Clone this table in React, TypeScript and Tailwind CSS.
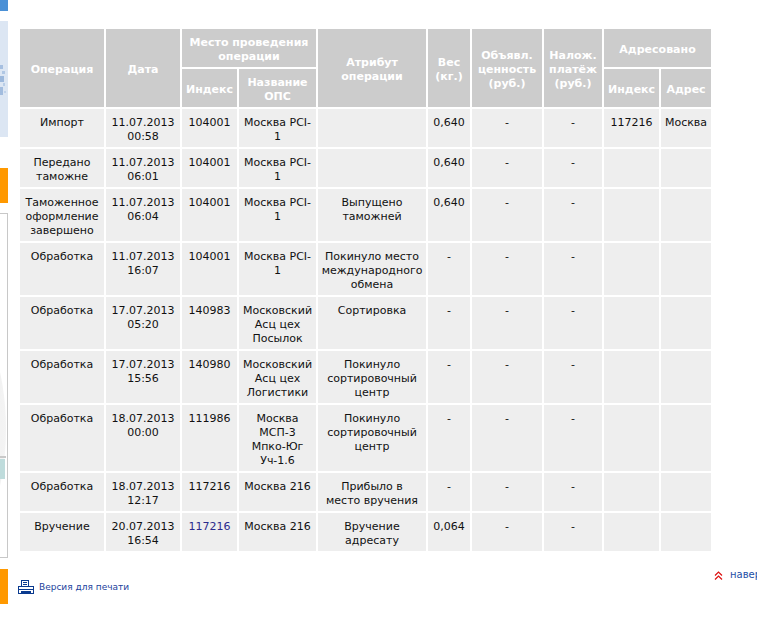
import React from "react";

type Row = {
  op: string[];
  date: string[];
  idx: string;
  idxBlue?: boolean;
  ops: string[];
  attr: string[];
  weight: string;
  val: string;
  cod: string;
  aIdx: string;
  aAddr: string;
};

const rows: Row[] = [
  { op: ["Импорт"], date: ["11.07.2013", "00:58"], idx: "104001", ops: ["Москва PCI-", "1"], attr: [], weight: "0,640", val: "-", cod: "-", aIdx: "117216", aAddr: "Москва" },
  { op: ["Передано", "таможне"], date: ["11.07.2013", "06:01"], idx: "104001", ops: ["Москва PCI-", "1"], attr: [], weight: "0,640", val: "-", cod: "-", aIdx: "", aAddr: "" },
  { op: ["Таможенное", "оформление", "завершено"], date: ["11.07.2013", "06:04"], idx: "104001", ops: ["Москва PCI-", "1"], attr: ["Выпущено", "таможней"], weight: "0,640", val: "-", cod: "-", aIdx: "", aAddr: "" },
  { op: ["Обработка"], date: ["11.07.2013", "16:07"], idx: "104001", ops: ["Москва PCI-", "1"], attr: ["Покинуло место", "международного", "обмена"], weight: "-", val: "-", cod: "-", aIdx: "", aAddr: "" },
  { op: ["Обработка"], date: ["17.07.2013", "05:20"], idx: "140983", ops: ["Московский", "Асц цех", "Посылок"], attr: ["Сортировка"], weight: "-", val: "-", cod: "-", aIdx: "", aAddr: "" },
  { op: ["Обработка"], date: ["17.07.2013", "15:56"], idx: "140980", ops: ["Московский", "Асц цех", "Логистики"], attr: ["Покинуло", "сортировочный", "центр"], weight: "-", val: "-", cod: "-", aIdx: "", aAddr: "" },
  { op: ["Обработка"], date: ["18.07.2013", "00:00"], idx: "111986", ops: ["Москва", "МСП-3", "Мпко-Юг", "Уч-1.6"], attr: ["Покинуло", "сортировочный", "центр"], weight: "-", val: "-", cod: "-", aIdx: "", aAddr: "" },
  { op: ["Обработка"], date: ["18.07.2013", "12:17"], idx: "117216", ops: ["Москва 216"], attr: ["Прибыло в", "место вручения"], weight: "-", val: "-", cod: "-", aIdx: "", aAddr: "" },
  { op: ["Вручение"], date: ["20.07.2013", "16:54"], idx: "117216", idxBlue: true, ops: ["Москва 216"], attr: ["Вручение", "адресату"], weight: "0,064", val: "-", cod: "-", aIdx: "", aAddr: "" },
];

function Lines({ lines }: { lines: string[] }) {
  return (
    <>
      {lines.map((l, i) => (
        <React.Fragment key={i}>
          {i > 0 && <br />}
          {l}
        </React.Fragment>
      ))}
    </>
  );
}

const th = "bg-[#cccccc] text-white font-bold text-center align-middle px-[2px] pt-[7px] pb-[3px] whitespace-nowrap";
const td = "bg-[#eeeeee] text-[#111111] text-center align-top px-[2px] pt-[7px] pb-[3px] whitespace-nowrap";

function Printer() {
  return (
    <svg width="16" height="14" viewBox="0 0 16 14" className="block">
      <rect x="3.5" y="0.5" width="7" height="6" fill="white" stroke="#0a3a8f" />
      <line x1="5" y1="2.5" x2="9" y2="2.5" stroke="#0a3a8f" />
      <line x1="5" y1="4.5" x2="9" y2="4.5" stroke="#0a3a8f" />
      <rect x="0.5" y="6.5" width="15" height="7" fill="white" stroke="#0a3a8f" />
      <line x1="0.5" y1="9.5" x2="15.5" y2="9.5" stroke="#0a3a8f" />
      <rect x="3" y="11" width="10" height="2" fill="#0a3a8f" />
    </svg>
  );
}

function Chevrons() {
  return (
    <svg width="9" height="9" viewBox="0 0 9 9" className="block">
      <polyline points="1,4.5 4.5,1 8,4.5" fill="none" stroke="#dd1111" strokeWidth="1.2" />
      <polyline points="1,8.5 4.5,5 8,8.5" fill="none" stroke="#dd1111" strokeWidth="1.2" />
    </svg>
  );
}

export default function App() {
  return (
    <div className="w-[757px] h-[624px] overflow-hidden bg-white font-['DejaVu_Sans',Verdana,sans-serif]">
      <div className="flex w-[790px]">
        {/* left sidebar fragment */}
        <div className="w-[8px] flex flex-col shrink-0">
          <div className="h-[11px] bg-[#4a90d6]" />
          <div className="mt-[10px] h-[116px] bg-[#dce6f3] relative overflow-hidden">
            <svg width="8" height="116" viewBox="0 0 8 116" className="absolute left-0 top-0">
              <rect x="0" y="44" width="3" height="4" fill="#a6bfe0" />
              <rect x="2" y="50" width="3" height="3" fill="#b0c7e4" />
              <rect x="0" y="55" width="4" height="6" fill="#9cb8dc" />
              <rect x="3" y="62" width="2" height="3" fill="#b8cde7" />
              <rect x="0" y="66" width="3" height="8" fill="#a2bcde" />
              <rect x="4" y="70" width="2" height="2" fill="#c0d2ea" />
            </svg>
          </div>
          <div className="mt-[31px] h-[35px] bg-[#ff9900]" />
          <div className="mt-[10px] h-[345px] bg-white border-y border-r border-[#c8c8c8] relative overflow-hidden">
            <svg width="7" height="343" viewBox="0 0 7 343" className="absolute left-0 top-0">
              <defs>
                <linearGradient id="g1" x1="0" y1="0" x2="1" y2="0">
                  <stop offset="0" stopColor="#d8d8d8" />
                  <stop offset="1" stopColor="#f4f4f4" />
                </linearGradient>
              </defs>
              <ellipse cx="-40" cy="215" rx="46" ry="115" fill="url(#g1)" />
              <ellipse cx="-40" cy="215" rx="42" ry="108" fill="#f3f3f3" />
              <rect x="0" y="245" width="5" height="20" fill="#bfdcdc" />
              <rect x="0" y="242" width="6" height="2" fill="#c9c9c9" />
            </svg>
          </div>
          <div className="mt-[11px] h-[35px] bg-[#ff9900]" />
        </div>

        {/* main */}
        <div className="ml-[10px] pt-[27px] flex flex-col">
          <table className="table-fixed border-separate border-spacing-[2px] w-[695px] text-[11px] leading-[14px]">
            <colgroup>
              <col className="w-[84px]" />
              <col className="w-[74px]" />
              <col className="w-[55px]" />
              <col className="w-[77px]" />
              <col className="w-[108px]" />
              <col className="w-[42px]" />
              <col className="w-[70px]" />
              <col className="w-[58px]" />
              <col className="w-[55px]" />
              <col className="w-[50px]" />
            </colgroup>
            <thead>
              <tr>
                <th rowSpan={2} className={th}>Операция</th>
                <th rowSpan={2} className={th}>Дата</th>
                <th colSpan={2} className={th}>Место проведения<br />операции</th>
                <th rowSpan={2} className={th}>Атрибут<br />операции</th>
                <th rowSpan={2} className={th}>Вес<br />(кг.)</th>
                <th rowSpan={2} className={th}>Объявл.<br />ценность<br />(руб.)</th>
                <th rowSpan={2} className={th}>Налож.<br />платёж<br />(руб.)</th>
                <th colSpan={2} className={th}>Адресовано</th>
              </tr>
              <tr>
                <th className={th}>Индекс</th>
                <th className={th}>Название<br />ОПС</th>
                <th className={th}>Индекс</th>
                <th className={th}>Адрес</th>
              </tr>
            </thead>
            <tbody>
              {rows.map((r, i) => (
                <tr key={i}>
                  <td className={td}><Lines lines={r.op} /></td>
                  <td className={td}><Lines lines={r.date} /></td>
                  <td className={r.idxBlue ? td + " !text-[#2b2b8c]" : td}>{r.idx}</td>
                  <td className={td}><Lines lines={r.ops} /></td>
                  <td className={td}><Lines lines={r.attr} /></td>
                  <td className={td}>{r.weight}</td>
                  <td className={td}>{r.val}</td>
                  <td className={td}>{r.cod}</td>
                  <td className={td}>{r.aIdx}</td>
                  <td className={td}>{r.aAddr}</td>
                </tr>
              ))}
            </tbody>
          </table>

          <div className="mt-[16px] ml-[696px] flex items-center gap-[7px] h-[12px]">
            <Chevrons />
            <span className="text-[10px] leading-[12px] text-[#1c4ea6] whitespace-nowrap">наверх</span>
          </div>

          <div className="mt-[-1px] flex items-center gap-[5px] h-[14px]">
            <Printer />
            <span className="text-[9px] leading-[12px] text-[#1c3f9c] whitespace-nowrap">Версия для печати</span>
          </div>
        </div>
      </div>
    </div>
  );
}
